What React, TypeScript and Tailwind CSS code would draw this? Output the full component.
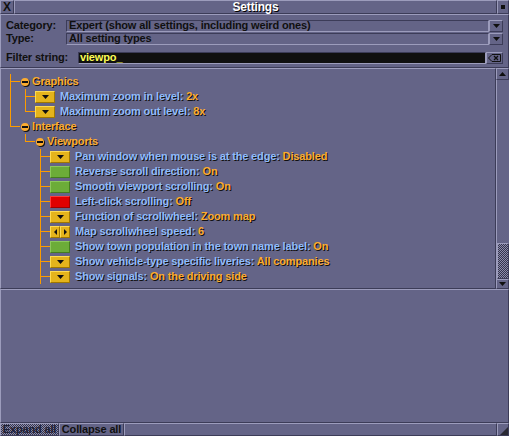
import type { ReactNode } from "react";

type Line = "pipe" | "tee" | "ell" | "none";
type Btn = "drop" | "on" | "off" | "arrows";

interface Row {
  lines: Line[];
  label: string;
  value?: string;
  btn?: Btn;
}

const ROWS: Row[] = [
  { lines: ["tee"], label: "Graphics" },
  { lines: ["pipe", "tee"], label: "Maximum zoom in level: ", value: "2x", btn: "drop" },
  { lines: ["pipe", "ell"], label: "Maximum zoom out level: ", value: "8x", btn: "drop" },
  { lines: ["ell"], label: "Interface" },
  { lines: ["none", "ell"], label: "Viewports" },
  { lines: ["none", "none", "tee"], label: "Pan window when mouse is at the edge: ", value: "Disabled", btn: "drop" },
  { lines: ["none", "none", "tee"], label: "Reverse scroll direction: ", value: "On", btn: "on" },
  { lines: ["none", "none", "tee"], label: "Smooth viewport scrolling: ", value: "On", btn: "on" },
  { lines: ["none", "none", "tee"], label: "Left-click scrolling: ", value: "Off", btn: "off" },
  { lines: ["none", "none", "tee"], label: "Function of scrollwheel: ", value: "Zoom map", btn: "drop" },
  { lines: ["none", "none", "tee"], label: "Map scrollwheel speed: ", value: "6", btn: "arrows" },
  { lines: ["none", "none", "tee"], label: "Show town population in the town name label: ", value: "On", btn: "on" },
  { lines: ["none", "none", "tee"], label: "Show vehicle-type specific liveries: ", value: "All companies", btn: "drop" },
  { lines: ["none", "none", "tee"], label: "Show signals: ", value: "On the driving side", btn: "drop" },
];

const FONT = "font-['Liberation_Sans',Arial,sans-serif] font-bold text-[11px] tracking-[-0.15px]";
const SHADOW = "[text-shadow:1px_1px_0_#101010]";
const CHECKER =
  "bg-[repeating-conic-gradient(#34344c_0_25%,#8c8cac_0_50%)] bg-[length:2px_2px]";

function TreeCell({ kind }: { kind: Line }) {
  return (
    <div className="relative w-[15px] h-full shrink-0">
      {(kind === "pipe" || kind === "tee") && (
        <div className="absolute left-[6px] top-0 bottom-0 w-px bg-[#fc9c00]" />
      )}
      {kind === "ell" && <div className="absolute left-[6px] top-0 h-[8px] w-px bg-[#fc9c00]" />}
      {(kind === "tee" || kind === "ell") && (
        <div className="absolute left-[6px] top-[7px] h-px w-[10px] bg-[#fc9c00]" />
      )}
    </div>
  );
}

function DownTri({ color = "#101010" }: { color?: string }) {
  return (
    <svg width="7" height="4" viewBox="0 0 7 4">
      <path d="M0 0h7L3.5 4z" fill={color} />
    </svg>
  );
}

function SettingButton({ kind }: { kind: Btn }) {
  if (kind === "arrows") {
    return (
      <div className="flex w-[20px] h-[12px] shrink-0">
        <div className="flex-1 flex items-center justify-center bg-[#e4b41c] border-t border-l border-[#fcdc54] border-r border-b border-r-[#a07800] border-b-[#a07800]">
          <svg width="3" height="6" viewBox="0 0 3 6">
            <path d="M3 0v6L0 3z" fill="#101010" />
          </svg>
        </div>
        <div className="flex-1 flex items-center justify-center bg-[#e4b41c] border-t border-l border-[#fcdc54] border-r border-b border-r-[#a07800] border-b-[#a07800]">
          <svg width="3" height="6" viewBox="0 0 3 6">
            <path d="M0 0v6l3-3z" fill="#101010" />
          </svg>
        </div>
      </div>
    );
  }
  const cls =
    kind === "drop"
      ? "bg-[#e4b41c] border-[#fcdc54] border-r-[#a07800] border-b-[#a07800]"
      : kind === "on"
        ? "bg-[#6cac38] border-[#8cc85c] border-r-[#447c20] border-b-[#447c20]"
        : "bg-[#e00000] border-[#fc3c3c] border-r-[#a00000] border-b-[#a00000]";
  return (
    <div className={`w-[20px] h-[12px] shrink-0 border flex items-center justify-center ${cls}`}>
      {kind === "drop" && <DownTri />}
    </div>
  );
}

function TreeRow({ row }: { row: Row }) {
  const header = !row.btn;
  return (
    <div className="flex items-stretch h-[15px]">
      {row.lines.map((l, i) => (
        <TreeCell key={i} kind={l} />
      ))}
      {header ? (
        <div className="flex items-center">
          <div className="ml-[2px] w-[8px] h-[8px] rounded-full bg-[#fcac30] flex items-center justify-center shadow-[1px_1px_0_#101010]">
            <div className="w-[6px] h-[2px] bg-[#101010]" />
          </div>
          <span className={`ml-[3px] text-[#fcac30] ${SHADOW}`}>{row.label}</span>
        </div>
      ) : (
        <div className="flex items-center">
          <div className="ml-px">
            <SettingButton kind={row.btn!} />
          </div>
          <span className={`ml-[5px] whitespace-pre text-[#90bcfc] ${SHADOW}`}>
            {row.label}
            <span className="text-[#fcac30]">{row.value}</span>
          </span>
        </div>
      )}
    </div>
  );
}

function Bevel({ className = "", children }: { className?: string; children?: ReactNode }) {
  return (
    <div className={`border border-[#9c9cbc] border-r-[#3c3c58] border-b-[#3c3c58] bg-[#646487] ${className}`}>
      {children}
    </div>
  );
}

function Dropdown({ text }: { text: string }) {
  return (
    <div className="flex-1 flex h-[12px]">
      <div className="flex-1 border border-[#3c3c58] border-r-[#9c9cbc] border-b-[#9c9cbc] flex items-center px-[2px] text-[#101010] overflow-hidden whitespace-nowrap">
        {text}
      </div>
      <Bevel className="w-[14px] flex items-center justify-center">
        <DownTri />
      </Bevel>
    </div>
  );
}

export default function App() {
  return (
    <div className={`w-[509px] h-[436px] bg-[#646487] flex flex-col overflow-hidden ${FONT}`}>
      {/* Title bar */}
      <div className="flex h-[14px] shrink-0">
        <Bevel className="w-[14px] flex items-center justify-center text-[#101010] text-[12px] leading-none">
          X
        </Bevel>
        <Bevel className="flex-1 flex items-center justify-center text-white text-[12px] leading-none [text-shadow:1px_1px_0_#000]">
          Settings
        </Bevel>
        <Bevel className="w-[12px] flex items-center justify-center">
          <div className="w-[4px] h-[4px] bg-[#101010]" />
        </Bevel>
      </div>

      {/* Filters */}
      <Bevel className="shrink-0 h-[54px] pt-[4px] pl-[5px] pr-[5px] flex flex-col">
        <div className="flex items-center h-[13px]">
          <span className="w-[60px] text-[#101010]">Category:</span>
          <Dropdown text="Expert (show all settings, including weird ones)" />
        </div>
        <div className="flex items-center h-[13px]">
          <span className="w-[60px] text-[#101010]">Type:</span>
          <Dropdown text="All setting types" />
        </div>
        <div className="flex items-center h-[13px] mt-[6px]">
          <span className="w-[72px] text-[#101010]">Filter string:</span>
          <div className="flex-1 h-[12px] bg-[#101010] border border-[#3c3c58] border-r-[#9c9cbc] border-b-[#9c9cbc] flex items-center px-[1px] text-[#fcfc54]">
            viewpo_
          </div>
          <Bevel className="w-[17px] h-[12px] flex items-center justify-center">
            <svg width="13" height="8" viewBox="0 0 13 8">
              <path d="M4 0.5h8.5v7H4L0.5 4z" fill="none" stroke="#101010" />
              <path d="M6 2l4 4M10 2l-4 4" stroke="#101010" strokeWidth="1.3" />
            </svg>
          </Bevel>
        </div>
      </Bevel>

      {/* Settings tree */}
      <div className="flex h-[221px] shrink-0">
        <Bevel className="flex-1 pt-[5px] pl-[3px] overflow-hidden">
          {ROWS.map((r, i) => (
            <TreeRow key={i} row={r} />
          ))}
        </Bevel>
        <div className="w-[13px] flex flex-col">
          <Bevel className="h-[12px] flex items-center justify-center">
            <svg width="7" height="4" viewBox="0 0 7 4">
              <path d="M0 4h7L3.5 0z" fill="#101010" />
            </svg>
          </Bevel>
          <div className="flex-1 flex flex-col border-l border-[#9c9cbc]">
            <div className="flex-1" />
            <div className={`h-[36px] border border-[#9c9cbc] border-r-[#3c3c58] border-b-[#3c3c58] ${CHECKER}`} />
          </div>
          <Bevel className="h-[10px] flex items-center justify-center">
            <DownTri />
          </Bevel>
        </div>
      </div>

      {/* Description */}
      <Bevel className="flex-1" />

      {/* Bottom buttons */}
      <div className="flex h-[13px] shrink-0">
        <div className={`w-[59px] flex items-center justify-center text-[#202034] border border-[#9c9cbc] border-r-[#3c3c58] border-b-[#3c3c58] ${CHECKER}`}>
          Expand all
        </div>
        <Bevel className="w-[65px] flex items-center justify-center text-[#101010]">Collapse all</Bevel>
        <Bevel className="flex-1" />
        <Bevel className="w-[12px] flex items-end justify-end">
          <svg width="8" height="8" viewBox="0 0 8 8">
            <path d="M8 0v8H0z" fill="#101010" opacity="0.7" />
          </svg>
        </Bevel>
      </div>
    </div>
  );
}
